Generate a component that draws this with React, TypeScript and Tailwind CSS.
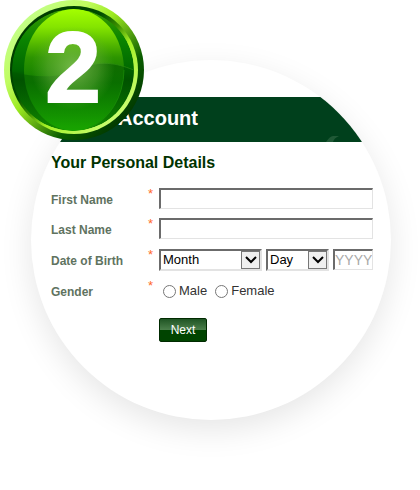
import React, { useState } from 'react'

const labelClass = "w-24 pt-0.5 text-xs font-bold text-[#5f735f]"
const fieldClass = "h-[21px] bg-white border border-t-2 border-l-2 border-t-[#6b6b6b] border-l-[#6b6b6b] border-b-[#e3e3e3] border-r-[#e3e3e3] text-black focus:outline-none"

const StepBadge = ({ step }) => {
    return (
        <svg viewBox="0 0 140 140" className="absolute left-1 top-0 w-[140px] h-[140px]" role="img" aria-label={`Step ${step}`}>
            <defs>
                <linearGradient id="rim" x1="0.12" y1="0.12" x2="0.88" y2="0.88">
                    <stop offset="0" stopColor="#c4ff8c" />
                    <stop offset="0.25" stopColor="#c0fc60" />
                    <stop offset="0.42" stopColor="#9cea20" />
                    <stop offset="0.55" stopColor="#68b414" />
                    <stop offset="0.75" stopColor="#0a5c00" />
                    <stop offset="1" stopColor="#003400" />
                </linearGradient>
                <linearGradient id="lip" x1="0.12" y1="0.12" x2="0.88" y2="0.88">
                    <stop offset="0" stopColor="#003800" />
                    <stop offset="0.35" stopColor="#004c00" />
                    <stop offset="0.5" stopColor="#3c9000" />
                    <stop offset="0.64" stopColor="#a4f024" />
                    <stop offset="1" stopColor="#ccff78" />
                </linearGradient>
                <linearGradient id="disc" x1="0" y1="0" x2="0" y2="1">
                    <stop offset="0" stopColor="#3c9c00" />
                    <stop offset="0.25" stopColor="#0a8400" />
                    <stop offset="0.5" stopColor="#006800" />
                    <stop offset="0.58" stopColor="#004c00" />
                    <stop offset="1" stopColor="#128c00" />
                </linearGradient>
                <linearGradient id="lens" x1="0" y1="0" x2="0" y2="1">
                    <stop offset="0" stopColor="#a4ff00" />
                    <stop offset="0.15" stopColor="#84e400" />
                    <stop offset="0.4" stopColor="#2c9400" />
                    <stop offset="0.6" stopColor="#107c00" />
                    <stop offset="1" stopColor="#18a400" />
                </linearGradient>
                <radialGradient id="glow">
                    <stop offset="0" stopColor="#90c860" stopOpacity="0.75" />
                    <stop offset="0.6" stopColor="#78b848" stopOpacity="0.4" />
                    <stop offset="1" stopColor="#60b030" stopOpacity="0" />
                </radialGradient>
                <linearGradient id="swoosh" x1="0" y1="0" x2="0" y2="1">
                    <stop offset="0" stopColor="#005400" stopOpacity="0.6" />
                    <stop offset="1" stopColor="#006c00" stopOpacity="0" />
                </linearGradient>
                <clipPath id="face">
                    <circle cx="69" cy="70" r="61" />
                </clipPath>
            </defs>
            <circle cx="70" cy="70" r="70" fill="url(#rim)" />
            <circle cx="70" cy="70" r="64" fill="url(#lip)" />
            <g clipPath="url(#face)">
                <circle cx="69" cy="70" r="61" fill="url(#disc)" />
                <ellipse cx="70" cy="70" rx="50" ry="61" fill="url(#lens)" />
                <path d="M9 72 C40 80 62 76 80 67 C98 60 116 64 132 71 V126 H9 Z" fill="url(#swoosh)" />
                <path d="M80 67 C98 60 116 64 132 71" fill="none" stroke="#2c8c10" strokeWidth="0.7" />
                <path d="M120 70 A50 61 0 0 1 84 128" fill="none" stroke="#1c8c08" strokeWidth="0.7" />
                <circle cx="69" cy="68" r="42" fill="url(#glow)" />
            </g>
            <text x="69" y="102" textAnchor="middle" fill="#fff" stroke="#fff" strokeWidth="2" className="font-['Liberation_Sans',Arial,sans-serif] font-bold text-[100px]">{step}</text>
        </svg>
    )
}

const Required = () => (
    <span className="w-3 pl-px self-start text-[13px] leading-3 text-[#ff6a28]" aria-hidden="true">*</span>
)

const SelectBox = ({ label, options, value, onChange, className }) => {
    return (
        <div className={`relative ${className}`}>
            <select
                aria-label={label}
                value={value}
                onChange={(e) => onChange(e.target.value)}
                className="block w-full h-[22px] appearance-none bg-white border-2 border-t-[#6b6b6b] border-l-[#6b6b6b] border-b-[#e3e3e3] border-r-[#e3e3e3] pl-0.5 pr-5 text-[13px] leading-4 text-black"
            >
                <option value="">{label}</option>
                {options.map((option) => (
                    <option key={option}>{option}</option>
                ))}
            </select>
            <span className="absolute top-0.5 right-0.5 flex justify-center items-center w-[19px] h-[18px] border border-[#777] bg-[#efefef] pointer-events-none">
                <svg viewBox="0 0 12 8" className="w-3 h-2">
                    <path d="M1 1 L6 6 L11 1" fill="none" stroke="#000" strokeWidth="2" />
                </svg>
            </span>
        </div>
    )
}

const months = ['January', 'February', 'March', 'April', 'May', 'June', 'July', 'August', 'September', 'October', 'November', 'December']
const days = Array.from({ length: 31 }, (_, i) => i + 1)

const App = () => {
    const [firstName, setFirstName] = useState('');
    const [lastName, setLastName] = useState('');
    const [month, setMonth] = useState('');
    const [day, setDay] = useState('');
    const [year, setYear] = useState('');
    const [gender, setGender] = useState('');

    return (
        <main className="relative max-w-[420px] pt-[60px] pl-[31px] pr-[29px] pb-[70px] bg-white font-['Liberation_Sans',Arial,sans-serif]">
            <section className="aspect-square rounded-full overflow-hidden bg-white pt-[37px] shadow-[0_10px_32px_rgba(0,0,0,0.1)]">
                <header className="relative h-[45px] flex items-center overflow-hidden bg-[#00401c] pl-[87px] pb-1">
                    <h1 className="text-xl font-bold leading-6 text-white">Account</h1>
                    <svg viewBox="0 0 14 6" className="absolute right-[51px] bottom-0 w-3.5 h-1.5">
                        <path d="M0 6 Q4 0 7 0 H13 Q8 2 7 6 Z" fill="#1f5936" />
                    </svg>
                </header>
                <form onSubmit={(e) => e.preventDefault()} className="pl-5 pr-[18px] pt-[11px]">
                    <h2 className="text-base font-bold leading-5 text-[#003300]">Your Personal Details</h2>

                    <div className="flex items-center mt-[15px]">
                        <label htmlFor="firstName" className={labelClass}>First Name</label>
                        <Required />
                        <input id="firstName" type="text" value={firstName} onChange={(e) => setFirstName(e.target.value)} className={`${fieldClass} flex-1 min-w-0 px-1 text-[13px]`} />
                    </div>

                    <div className="flex items-center mt-[9px]">
                        <label htmlFor="lastName" className={labelClass}>Last Name</label>
                        <Required />
                        <input id="lastName" type="text" value={lastName} onChange={(e) => setLastName(e.target.value)} className={`${fieldClass} flex-1 min-w-0 px-1 text-[13px]`} />
                    </div>

                    <div className="flex items-center mt-2.5">
                        <span className={labelClass}>Date of Birth</span>
                        <Required />
                        <div className="flex flex-1 min-w-0 gap-1">
                            <SelectBox label="Month" options={months} value={month} onChange={setMonth} className="w-[103px]" />
                            <SelectBox label="Day" options={days} value={day} onChange={setDay} className="w-[63px]" />
                            <input
                                type="text"
                                aria-label="Year"
                                placeholder="YYYY"
                                value={year}
                                onChange={(e) => setYear(e.target.value)}
                                className={`${fieldClass} flex-1 min-w-0 text-sm leading-4 placeholder:text-[#a9a9a9]`}
                            />
                        </div>
                    </div>

                    <div role="radiogroup" aria-labelledby="genderLabel" className="flex items-center mt-[9px] h-[22px]">
                        <span id="genderLabel" className={labelClass}>Gender</span>
                        <Required />
                        <label className="flex items-center gap-[3px] ml-1 text-[13px] text-[#333]">
                            <input type="radio" name="gender" checked={gender === 'male'} onChange={() => setGender('male')} className="w-[13px] h-[13px]" />
                            Male
                        </label>
                        <label className="flex items-center gap-[3px] ml-2 text-[13px] text-[#333]">
                            <input type="radio" name="gender" checked={gender === 'female'} onChange={() => setGender('female')} className="w-[13px] h-[13px]" />
                            Female
                        </label>
                    </div>

                    <button
                        type="submit"
                        className="block mt-4 ml-[108px] w-12 h-6 rounded-xs border border-[#002a00] bg-linear-to-b from-[#1f5524] from-0% via-[#4c804c] via-50% to-[#004400] to-50% text-xs text-white"
                    >Next</button>
                </form>
            </section>
            <StepBadge step={2} />
        </main>
    )
}

export default App
